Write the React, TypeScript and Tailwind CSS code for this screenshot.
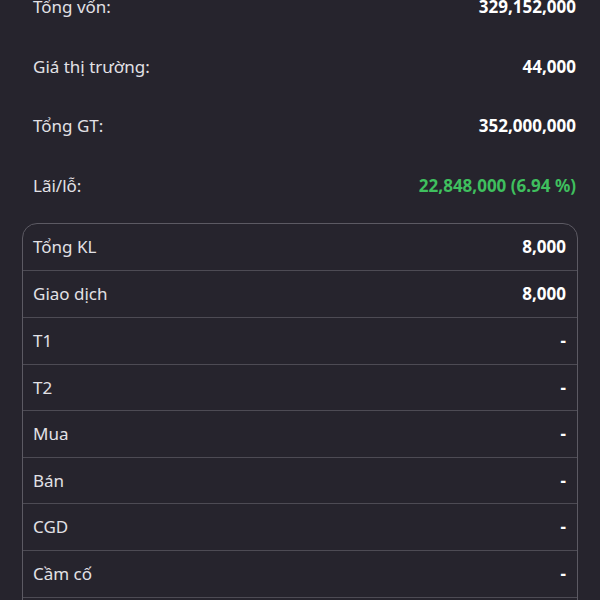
import React from "react";

const top = [
  { l: "Tổng vốn:", v: "329,152,000" },
  { l: "Giá thị trường:", v: "44,000" },
  { l: "Tổng GT:", v: "352,000,000" },
  { l: "Lãi/lỗ:", v: "22,848,000 (6.94 %)", green: true },
];

const rows = [
  { l: "Tổng KL", v: "8,000" },
  { l: "Giao dịch", v: "8,000" },
  { l: "T1", v: "-" },
  { l: "T2", v: "-" },
  { l: "Mua", v: "-" },
  { l: "Bán", v: "-" },
  { l: "CGD", v: "-" },
  { l: "Cầm cố", v: "-" },
  { l: "", v: "" },
];

export default function App() {
  return (
    <div
      className="w-[600px] h-[600px] overflow-hidden bg-[#26242d] text-[17px]"
      style={{ fontFamily: '"Noto Sans", "Open Sans", sans-serif' }}
    >
      <div className="-mt-[23px] pl-[33px] pr-[24px]">
        {top.map((r) => (
          <div key={r.l} className="h-[59.7px] flex items-center justify-between">
            <span className="text-[#e2e1e6]">{r.l}</span>
            <span className={"font-bold " + (r.green ? "text-[#3fbf5e]" : "text-white")}>{r.v}</span>
          </div>
        ))}
      </div>
      <div className="mx-[22px] mt-[7px] border border-[#5c5a63] rounded-t-[15px] bg-[#26242d]">
        {rows.map((r, i) => (
          <div
            key={i}
            className={
              "h-[46.6px] flex items-center justify-between pl-[10px] pr-[11px] " +
              (i > 0 ? "border-t border-[#4d4b54]" : "")
            }
          >
            <span className="text-[#e2e1e6]">{r.l}</span>
            <span className="font-bold text-white">{r.v}</span>
          </div>
        ))}
      </div>
    </div>
  );
}
